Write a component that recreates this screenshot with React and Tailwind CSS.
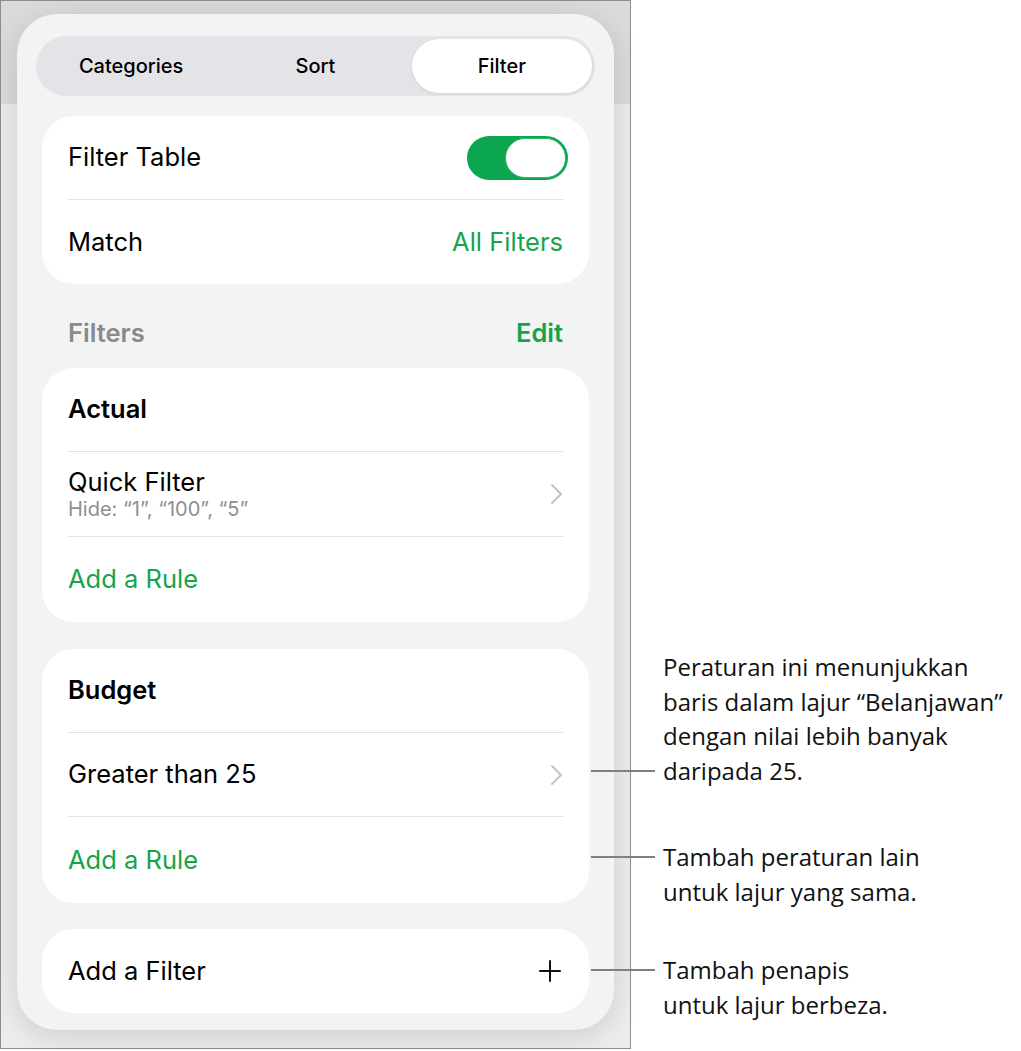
import React from "react";

const green = "text-[#17a34a]";

function Chevron() {
  return (
    <svg width="14" height="22" viewBox="0 0 14 22" fill="none">
      <path d="M3 2l9 9-9 9" stroke="#c3c3c7" strokeWidth="2" strokeLinecap="round" strokeLinejoin="round" />
    </svg>
  );
}

function Plus() {
  return (
    <svg width="22" height="22" viewBox="0 0 22 22" fill="none">
      <path d="M11 1v20M1 11h20" stroke="#111" strokeWidth="2" strokeLinecap="round" />
    </svg>
  );
}

function Divider() {
  return <div className="mx-[26px] h-px bg-[#e2e2e4]" />;
}

function Card({ children, className = "" }) {
  return (
    <div className={"mx-[6px] rounded-[32px] bg-white " + className}>{children}</div>
  );
}

function Callout({ top, lineY, lines }) {
  return (
    <>
      <div
        className="absolute left-[591px] h-[2px] w-[64px] bg-[#808080]"
        style={{ top: lineY }}
      />
      <div
        className="absolute left-[663px] text-[24px] leading-[34.5px] text-[#111] font-['Open_Sans',sans-serif]"
        style={{ top }}
      >
        {lines.map((l) => (
          <div key={l}>{l}</div>
        ))}
      </div>
    </>
  );
}

export default function App() {
  return (
    <div className="relative flex h-[1051px] w-[1021px] bg-white font-['Inter',sans-serif] text-black">
      <div className="h-[1049px] w-[631px] border border-[#8d8d8d] bg-[linear-gradient(to_bottom,#dadadd_0px,#dadadd_103px,#ececec_103px)] pl-[16px] pt-[13px]">
        <div className="flex h-[1016px] w-[597px] flex-col rounded-[40px] bg-[#f2f3f3] px-[19px] pt-[22px] shadow-[0_6px_28px_rgba(0,0,0,0.13)]">
          {/* segmented control */}
          <div className="grid h-[60px] grid-cols-3 rounded-full bg-[#e4e4e8] p-[3px] text-[20px] font-medium">
            <div className="flex items-center justify-center">Categories</div>
            <div className="flex items-center justify-center">Sort</div>
            <div className="ml-[4px] flex items-center justify-center rounded-full bg-white shadow-[0_1px_3px_rgba(0,0,0,0.08)]">
              Filter
            </div>
          </div>

          <Card className="mt-[20px] text-[25.5px]">
            <div className="flex h-[83px] items-center justify-between px-[26px]">
              <span>Filter Table</span>
              <div className="-mr-[5px] flex h-[44px] w-[101px] items-center justify-end rounded-full bg-[#0ba64f] p-[2px]">
                <div className="h-[40px] w-[61px] rounded-full border border-[#2fb866] bg-white" />
              </div>
            </div>
            <Divider />
            <div className="flex h-[84px] items-center justify-between px-[26px]">
              <span>Match</span>
              <span className={green}>All Filters</span>
            </div>
          </Card>

          <div className="flex items-center justify-between px-[32px] pb-[20px] pt-[34px] text-[25.5px] font-semibold leading-[30px]">
            <span className="text-[#8a8a8e]">Filters</span>
            <span className={green}>Edit</span>
          </div>

          <Card className="text-[25.5px]">
            <div className="flex h-[83px] items-center px-[26px] font-semibold">Actual</div>
            <Divider />
            <div className="flex h-[84px] items-center justify-between px-[26px]">
              <div className="flex flex-col">
                <span className="leading-[30px]">Quick Filter</span>
                <span className="text-[20px] leading-[24px] text-[#8e8e93]">
                  Hide: “1”, “100”, “5”
                </span>
              </div>
              <Chevron />
            </div>
            <Divider />
            <div className="flex h-[85px] items-center px-[26px]">
              <span className={green}>Add a Rule</span>
            </div>
          </Card>

          <Card className="mt-[27px] text-[25.5px]">
            <div className="flex h-[83px] items-center px-[26px] font-semibold">Budget</div>
            <Divider />
            <div className="flex h-[83px] items-center justify-between px-[26px]">
              <span>Greater than 25</span>
              <Chevron />
            </div>
            <Divider />
            <div className="flex h-[86px] items-center px-[26px]">
              <span className={green}>Add a Rule</span>
            </div>
          </Card>

          <Card className="mt-[26px] text-[25.5px]">
            <div className="flex h-[84px] items-center justify-between px-[26px] pr-[28px]">
              <span>Add a Filter</span>
              <Plus />
            </div>
          </Card>
        </div>
      </div>

      <Callout
        top={650}
        lineY={770}
        lines={["Peraturan ini menunjukkan", "baris dalam lajur “Belanjawan”", "dengan nilai lebih banyak", "daripada 25."]}
      />
      <Callout top={840} lineY={856} lines={["Tambah peraturan lain", "untuk lajur yang sama."]} />
      <Callout top={953} lineY={969} lines={["Tambah penapis", "untuk lajur berbeza."]} />
    </div>
  );
}
